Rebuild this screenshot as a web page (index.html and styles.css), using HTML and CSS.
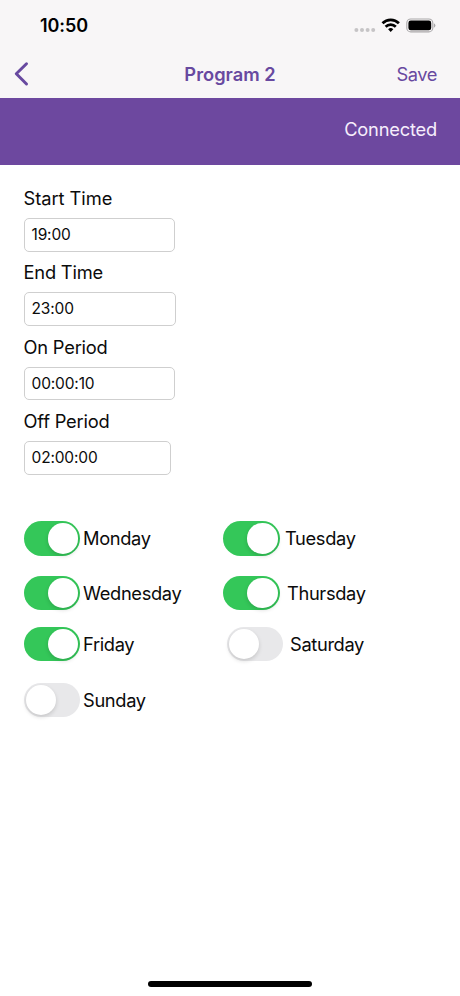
FILE: index.html
```html
<!DOCTYPE html>
<html lang="en">
<head>
<meta charset="utf-8">
<title>Program 2</title>
<link rel="stylesheet" href="styles.css">
</head>
<body>
<div class="screen">
  <header class="top">
    <div class="status">
      <span class="clock">10:50</span>
      <svg class="status-icons" width="84" height="20" viewBox="0 0 84 20">
        <g fill="#c6c4c6"><circle cx="4.4" cy="14" r="2"/><circle cx="10" cy="14" r="2"/><circle cx="15.6" cy="14" r="2"/><circle cx="21.2" cy="14" r="2"/></g>
        <g fill="none" stroke="#000" stroke-width="2.7">
          <path d="M30.5 7.3a11.6 11.6 0 0 1 16.4 0"/>
          <path d="M33.6 10.7a7.2 7.2 0 0 1 10.2 0"/>
        </g>
        <path d="M38.7 15.9l-2.6-2.7a3.9 3.9 0 0 1 5.2 0z"/>
        <rect x="54.8" y="3" width="26" height="12.9" rx="4" fill="none" stroke="#aaa8aa" stroke-width="1.1"/>
        <rect x="56.4" y="4.6" width="22.8" height="9.7" rx="2.4"/>
        <path d="M81.9 7.3v4.5q1.5-.7 1.5-2.2t-1.5-2.3z" fill="#aaa8aa"/>
      </svg>
    </div>
    <nav class="nav">
      <svg class="back" width="16" height="26" viewBox="0 0 16 26"><path d="M13.5 2.8L3.3 12.8 13.5 23" fill="none" stroke="#6849a0" stroke-width="3" stroke-linecap="round" stroke-linejoin="round"/></svg>
      <h1 class="title">Program 2</h1>
      <span class="save">Save</span>
    </nav>
  </header>
  <div class="banner"><span class="connected">Connected</span></div>
  <main>
    <section class="fields">
      <div class="field"><span class="label start">Start Time</span><div class="input">19:00</div></div>
      <div class="field"><span class="label">End Time</span><div class="input wide">23:00</div></div>
      <div class="field"><span class="label">On Period</span><div class="input">00:00:10</div></div>
      <div class="field"><span class="label">Off Period</span><div class="input narrow">02:00:00</div></div>
    </section>
    <section class="days">
      <div class="day"><span class="toggle on"></span><span class="name">Monday</span></div>
      <div class="day"><span class="toggle on"></span><span class="name tue">Tuesday</span></div>
      <div class="day"><span class="toggle on"></span><span class="name">Wednesday</span></div>
      <div class="day"><span class="toggle on"></span><span class="name thu">Thursday</span></div>
      <div class="day"><span class="toggle on"></span><span class="name">Friday</span></div>
      <div class="day sat"><span class="toggle"></span><span class="name">Saturday</span></div>
      <div class="day"><span class="toggle"></span><span class="name">Sunday</span></div>
    </section>
  </main>
  <div class="home"></div>
</div>
</body>
</html>
```
FILE: styles.css
```css
* { box-sizing: border-box; }
body {
  margin: 0;
  background: #fff;
  color: #0b0b0b;
  font-family: Inter, "Liberation Sans", sans-serif;
  font-size: 18.3px;
  letter-spacing: -0.2px;
}
.screen {
  width: 460px;
  height: 996px;
  display: flex;
  flex-direction: column;
}
.top { height: 98px; background: #f8f6f7; }
.status {
  height: 50px;
  padding: 1px 24px 0 40px;
  display: flex;
  align-items: center;
  justify-content: space-between;
}
.clock { font-size: 18px; font-weight: 600; color: #000; letter-spacing: -0.1px; }
.nav {
  height: 47px;
  padding: 0 23px 0 13px;
  display: grid;
  grid-template-columns: 70px 1fr 60px;
  align-items: center;
  color: #6849a0;
}
.title { margin: 0; font-size: 18.3px; font-weight: 600; text-align: center; letter-spacing: 0; }
.save { text-align: right; letter-spacing: -0.45px; }
.banner {
  height: 66.5px;
  margin-top: 0;
  padding: 20px 23px 0 0;
  background: #6d489f;
  color: #f6eefc;
  text-align: right;
  line-height: 22px;
}
main { flex: 1; padding: 22.5px 24px 0 23.5px; }
.field { height: 74.4px; }
.label { display: block; height: 31px; line-height: 22px; white-space: nowrap; }
.start { letter-spacing: -0.05px; }
.input {
  width: 151px;
  height: 33.5px;
  padding: 0 7px;
  border: 1px solid #cfcfcf;
  border-radius: 5px;
  font-size: 15.5px;
  line-height: 31px;
}
.wide { width: 152px; }
.narrow { width: 147.5px; }
.input { letter-spacing: -0.15px; }
.days {
  margin-top: 36.5px;
  display: grid;
  grid-template-columns: 199.5px 200px;
  grid-template-rows: 54.5px 51px 56px 35px;
  align-items: start;
}
.day { display: flex; align-items: center; gap: 3px; }
.name { letter-spacing: -0.35px; }
.toggle {
  width: 56.5px;
  height: 34.5px;
  padding: 2px;
  border-radius: 18px;
  background: #e8e8ea;
  display: flex;
}
.toggle::before {
  content: "";
  width: 30.5px;
  height: 30.5px;
  border-radius: 50%;
  background: #fff;
  box-shadow: 0 2px 4px rgba(0, 0, 0, .15);
}
.toggle.on { background: #34c759; justify-content: flex-end; }
.tue { margin-left: 2.5px; }
.thu { margin-left: 4.5px; }
.sat { padding-left: 3.5px; gap: 7px; }
.home {
  width: 164px;
  height: 5.5px;
  margin: 0 auto 9.5px;
  border-radius: 3px;
  background: #000;
}
```
